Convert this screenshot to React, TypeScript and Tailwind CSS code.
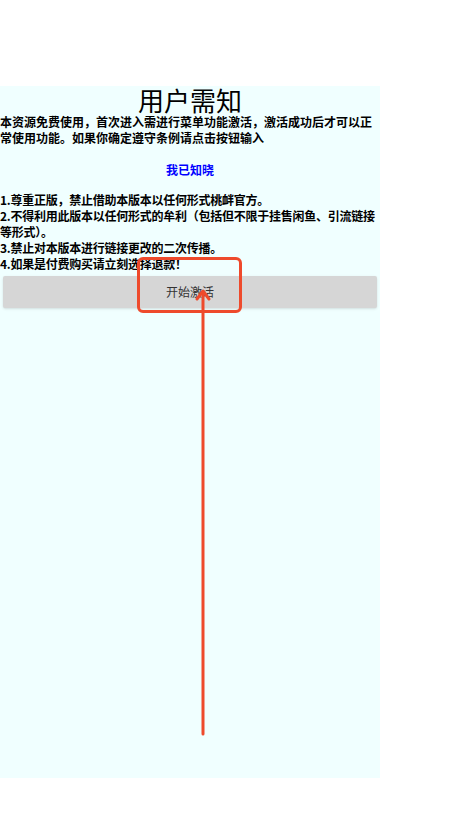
import React from "react";

const cjk = { fontFamily: '"Noto Sans CJK SC", "Noto Sans", sans-serif' };

const rules = [
  "1.尊重正版，禁止借助本版本以任何形式桃衅官方。",
  "2.不得利用此版本以任何形式的牟利（包括但不限于挂售闲鱼、引流链接等形式）。",
  "3.禁止对本版本进行链接更改的二次传播。",
  "4.如果是付费购买请立刻选择退款！",
];

export default function App() {
  return (
    <div className="relative w-[467px] h-[831px] bg-white overflow-hidden" style={cjk}>
      {/* 面板 */}
      <div className="mt-[86px] w-[380px] h-[692px] bg-[#f0ffff] flex flex-col">
        <h1 className="text-center text-[26px] leading-[28px] font-normal text-black">用户需知</h1>
        <p className="text-[12px] leading-[16px] font-bold text-black">
          本资源免费使用，首次进入需进行菜单功能激活，激活成功后才可以正常使用功能。如果你确定遵守条例请点击按钮输入
        </p>
        <p className="mt-4 text-center text-[12px] leading-[16px] font-bold text-[#0000ff]">我已知晓</p>
        <div className="mt-[14px] flex flex-col">
          {rules.map((r) => (
            <p key={r} className="text-[12px] leading-[16px] font-bold tracking-[-0.25px] text-black">
              {r}
            </p>
          ))}
        </div>
        <button className="mx-[3px] mt-1 h-8 bg-[#d6d6d6] rounded-[2px] shadow-sm text-[12px] text-[#333]">
          开始激活
        </button>
      </div>

      {/* 标注 */}
      <div className="absolute left-[137px] top-[257px] w-[105px] h-[56px] border-[3px] border-[#ee4a2c] rounded-[6px]" />
      <svg className="absolute left-[193px] top-[286px]" width="20" height="452" viewBox="0 0 20 452">
        <line x1="10" y1="6" x2="10" y2="448" stroke="#ee4a2c" strokeWidth="3" strokeLinecap="round" />
        <polyline points="4,13 10,5 16,13" fill="none" stroke="#ee4a2c" strokeWidth="3" strokeLinejoin="round" strokeLinecap="round" />
      </svg>
    </div>
  );
}
